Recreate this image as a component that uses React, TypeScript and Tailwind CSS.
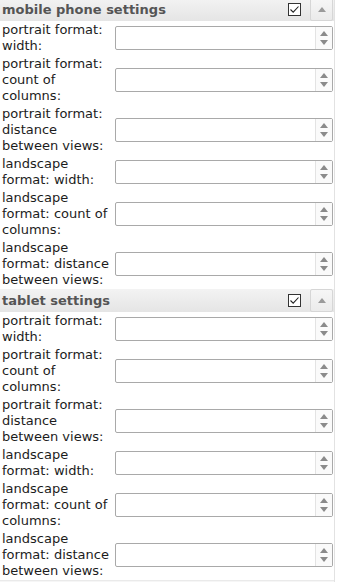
import React from "react";

const fields = [
  "portrait format: width:",
  "portrait format: count of columns:",
  "portrait format: distance between views:",
  "landscape format: width:",
  "landscape format: count of columns:",
  "landscape format: distance between views:",
];

function NumberBox() {
  return (
    <div className="flex h-[24px] w-[218px] shrink-0 rounded-[2px] border border-[#a9a9a9] bg-white">
      <div className="flex-1" />
      <div className="flex w-[17px] flex-col items-center justify-center gap-[4px] border-l border-[#e3e3e3] bg-[#fafafa]">
        <svg width="8" height="5" viewBox="0 0 8 5">
          <path d="M0 5 L4 0 L8 5 Z" fill="#8a8a8a" />
        </svg>
        <svg width="8" height="5" viewBox="0 0 8 5">
          <path d="M0 0 L8 0 L4 5 Z" fill="#8a8a8a" />
        </svg>
      </div>
    </div>
  );
}

function SectionHeader({ title }: { title: string }) {
  return (
    <div className="flex h-[23px] items-center bg-gradient-to-b from-[#f3f3f3] to-[#e5e5e5] pl-[2px]">
      <span className="flex-1 text-[13px] font-bold text-[#555]">{title}</span>
      {/* checkbox */}
      <div className="mr-[9px] flex h-[13px] w-[13px] items-center justify-center border border-[#333] bg-white">
        <svg width="11" height="11" viewBox="0 0 11 11">
          <path d="M1.5 5.5 L4.2 8.2 L9.5 2.5" fill="none" stroke="#222" strokeWidth="1.1" />
        </svg>
      </div>
      {/* collapse button */}
      <div className="mr-[1px] flex h-[23px] w-[23px] items-center justify-center rounded-[2px] border border-[#d6d6d6] bg-gradient-to-b from-[#f6f6f6] to-[#ebebeb]">
        <svg width="8" height="5" viewBox="0 0 8 5">
          <path d="M0 5 L4 0 L8 5 Z" fill="#9a9a9a" />
        </svg>
      </div>
    </div>
  );
}

function Section({ title }: { title: string }) {
  return (
    <div>
      <SectionHeader title={title} />
      {fields.map((label) => (
        <div key={label} className="flex items-center py-px">
          <div className="w-[115px] shrink-0 pl-[2px] pr-[2px] text-[13px] leading-4 text-[#1c1c1c]">
            {label}
          </div>
          <NumberBox />
        </div>
      ))}
    </div>
  );
}

export default function App() {
  return (
    <div
      className="h-[582px] w-[337px] overflow-hidden bg-white"
      style={{ fontFamily: '"DejaVu Sans", Verdana, sans-serif' }}
    >
      <div className="-mt-[2px] w-[335px] border-r border-[#e2e2e2]">
        <Section title="mobile phone settings" />
        <Section title="tablet settings" />
        <div className="h-[10px] border-t border-[#eaeaea] bg-[#f6f6f6]" />
      </div>
    </div>
  );
}
